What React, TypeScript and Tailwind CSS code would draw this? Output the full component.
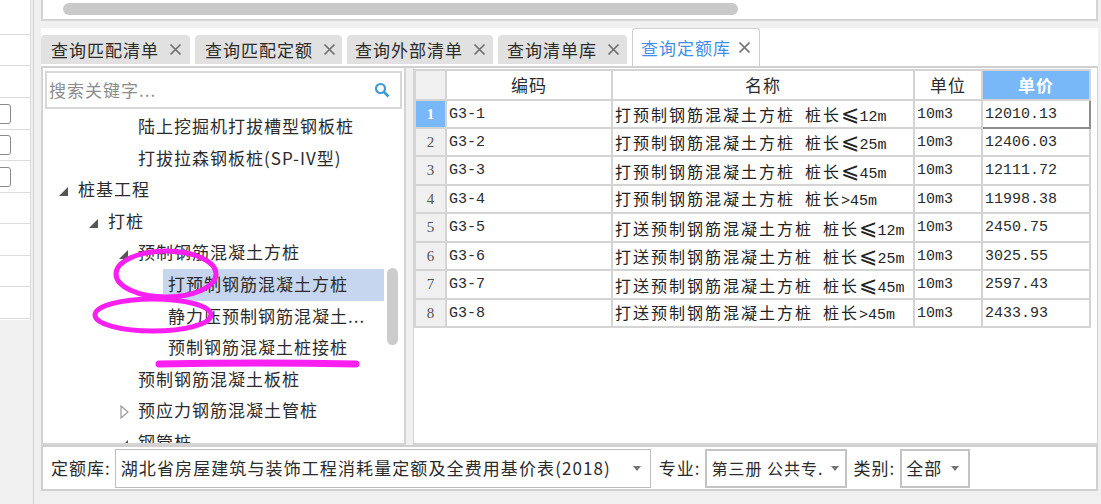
const CJK = '"Noto Sans CJK SC", sans-serif';
const MONO = '"Liberation Mono", "DejaVu Sans Mono", monospace';
const tabs = [
  { t: '查询匹配清单', c: 'w-[149px] pl-[10px]' },
  { t: '查询匹配定额', c: 'w-[147px] pl-[10px]' },
  { t: '查询外部清单', c: 'w-[146px] pl-[8px]' },
  { t: '查询清单库', c: 'w-[129px] pl-[9px]' },
];
const rows = [
  ['G3-1', '打预制钢筋混凝土方桩', '≤', '12m', '12010.13'],
  ['G3-2', '打预制钢筋混凝土方桩', '≤', '25m', '12406.03'],
  ['G3-3', '打预制钢筋混凝土方桩', '≤', '45m', '12111.72'],
  ['G3-4', '打预制钢筋混凝土方桩', '', '>45m', '11998.38'],
  ['G3-5', '打送预制钢筋混凝土方桩', '≤', '12m', '2450.75'],
  ['G3-6', '打送预制钢筋混凝土方桩', '≤', '25m', '3025.55'],
  ['G3-7', '打送预制钢筋混凝土方桩', '≤', '45m', '2597.43'],
  ['G3-8', '打送预制钢筋混凝土方桩', '', '>45m', '2433.93'],
];
const tree: { t: string; pl: string; a?: 'open' | 'closed'; sel?: boolean }[] = [
  { t: '陆上挖掘机打拔槽型钢板桩', pl: 'pl-[95px]' },
  { t: '打拔拉森钢板桩(SP-IV型)', pl: 'pl-[95px]' },
  { t: '桩基工程', pl: 'pl-[35px]', a: 'open' },
  { t: '打桩', pl: 'pl-[65px]', a: 'open' },
  { t: '预制钢筋混凝土方桩', pl: 'pl-[95px]', a: 'open' },
  { t: '打预制钢筋混凝土方桩', pl: 'pl-[125px]', sel: true },
  { t: '静力压预制钢筋混凝土...', pl: 'pl-[125px]' },
  { t: '预制钢筋混凝土桩接桩', pl: 'pl-[125px]' },
  { t: '预制钢筋混凝土板桩', pl: 'pl-[95px]' },
  { t: '预应力钢筋混凝土管桩', pl: 'pl-[95px]', a: 'closed' },
  { t: '钢管桩', pl: 'pl-[95px]', a: 'open' },
];

function Close() {
  return (
    <svg width="13" height="13" viewBox="0 0 13 13" className="shrink-0">
      <path d="M1.5 1.5 L11.5 11.5 M11.5 1.5 L1.5 11.5" stroke="#707070" strokeWidth="1.7" />
    </svg>
  );
}
function Caret() {
  return (
    <svg width="8" height="5" viewBox="0 0 8 5" className="shrink-0">
      <path d="M0 0 H8 L4 5 Z" fill="#777" />
    </svg>
  );
}
function Arrow({ kind }: { kind: 'open' | 'closed' }) {
  if (kind === 'open')
    return (
      <svg width="9" height="9" viewBox="0 0 9 9" className="absolute left-[-19px] top-[13px]">
        <path d="M9 0 V9 H0 Z" fill="#555" />
      </svg>
    );
  return (
    <svg width="9" height="14" viewBox="0 0 9 14" className="absolute left-[-18px] top-[10px]">
      <path d="M1 1 L8 7 L1 13 Z" fill="#fff" stroke="#999" strokeWidth="1.2" />
    </svg>
  );
}

export default function App() {
  return (
    <div
      className="relative flex h-[504px] w-[1101px] overflow-hidden bg-[#f0f0f0] text-[17px] tracking-[1px] text-[#2b2b2b]"
      style={{ fontFamily: CJK }}
    >
      {/* left strip */}
      <div className="h-full w-[34px] shrink-0 border-r border-[#d4d4d4]">
        <div className="h-[320px] w-[31px] border-r border-[#dcdcdc] bg-white">
          {[35, 31, 32, 32, 31, 32, 31, 32, 31, 32].map((h, i) => (
            <div key={i} className="flex items-center border-b border-[#dcdcdc]" style={{ height: h }}>
              {i >= 3 && i <= 5 && <div className="ml-[-9px] h-[20px] w-[20px] rounded-[3px] border border-[#8a8a8a] bg-white" />}
            </div>
          ))}
        </div>
      </div>

      {/* main */}
      <div className="flex h-full min-w-0 flex-1 flex-col pl-[7px] pr-[3px]">
        <div className="h-[21px] shrink-0 border-x-2 border-b-2 border-[#d4d4d4] bg-white pl-[20px]">
          <div className="mt-[3px] h-[12px] w-[675px] rounded-full bg-[#c9c9c9]" />
        </div>
        <div className="h-[7px] shrink-0" />

        {/* tabs */}
        <div className="flex h-[38px] shrink-0 items-end gap-[5px] bg-white pb-[2px]">
          {tabs.map((x) => (
            <div key={x.t} className={`flex h-[29px] items-center gap-[10px] rounded-t-[4px] bg-[#e1e1e1] ${x.c}`}>
              <span className="whitespace-nowrap">{x.t}</span>
              <Close />
            </div>
          ))}
          <div className="mb-[-2px] flex h-[38px] w-[128px] items-center gap-[7px] rounded-t-[4px] border-x border-t border-[#cfcfcf] bg-white pl-[8px] text-[#3f8fe8]">
            <span className="whitespace-nowrap">查询定额库</span>
            <Close />
          </div>
        </div>

        {/* content */}
        <div className="flex h-[379px] shrink-0 border-t-2 border-[#d0d0d0]">
          {/* tree panel */}
          <div className="flex h-full w-[365px] shrink-0 flex-col border-x-2 border-b-2 border-[#d4d4d4] bg-white pt-[3px]">
            <div className="mx-[2px] flex h-[38px] shrink-0 items-center justify-between border-2 border-[#d8d8d8] pl-[2px] pr-[10px]">
              <span className="text-[#8c8c8c]">搜索关键字...</span>
              <svg width="16" height="16" viewBox="0 0 16 16">
                <circle cx="6.5" cy="6.5" r="4.5" fill="none" stroke="#3e9ad6" strokeWidth="2.2" />
                <path d="M10 10 L14.5 14.5" stroke="#3e9ad6" strokeWidth="2.6" />
              </svg>
            </div>
            <div className="relative mt-[2px] min-h-0 flex-1 overflow-hidden">
              {tree.map((n) => (
                <div key={n.t} className={`flex h-[31.6px] items-center ${n.pl}`}>
                  <div className="relative">
                    {n.a && <Arrow kind={n.a} />}
                    <div className={`flex h-[31.6px] items-center whitespace-nowrap pb-[2px] ${n.sel ? 'ml-[-5px] w-[221px] bg-[#c6d6ee] pl-[5px]' : ''}`}>{n.t}</div>
                  </div>
                </div>
              ))}
              <div className="absolute left-[344px] top-[157px] h-[77px] w-[11px] rounded-full bg-[#cccccc]" />
            </div>
          </div>

          {/* table */}
          <div className="ml-[7px] min-w-0 flex-1 border-x border-b-2 border-[#d4d4d4] bg-white pt-[1px]">
            <table className="table-fixed border-collapse leading-none" style={{ width: 675 }}>
              <colgroup>
                <col className="w-[31px]" />
                <col className="w-[166px]" />
                <col className="w-[302px]" />
                <col className="w-[68px]" />
                <col className="w-[108px]" />
              </colgroup>
              <thead>
                <tr className="h-[30px] text-center">
                  <th className="border-2 border-[#d4d4d4] bg-[#f0f0f0] font-normal" />
                  <th className="border-2 border-[#d4d4d4] pb-[2px] font-normal">编码</th>
                  <th className="border-2 border-[#d4d4d4] pb-[2px] font-normal">名称</th>
                  <th className="border-2 border-[#d4d4d4] pb-[2px] font-normal">单位</th>
                  <th className="border-2 border-[#d4d4d4] bg-[#79b8f8] pb-[2px] font-bold text-white">单价</th>
                </tr>
              </thead>
              <tbody>
                {rows.map((r, i) => (
                  <tr key={r[0]} className={i >= 2 && i % 2 === 0 ? 'h-[29px]' : 'h-[28px]'}>
                    <td
                      className={`border-2 border-[#d4d4d4] p-0 text-center text-[15px] tracking-normal ${i === 0 ? 'bg-[#79b8f8] font-bold text-white' : 'bg-[#f0f0f0] text-[#555]'}`}
                      style={{ fontFamily: '"Liberation Serif", serif' }}
                    >
                      {i + 1}
                    </td>
                    <td className="border-2 border-[#d4d4d4] p-0 pl-[2px] text-[15px] tracking-normal" style={{ fontFamily: MONO }}>
                      {r[0]}
                    </td>
                    <td className="whitespace-nowrap border-2 border-[#d4d4d4] p-0 pl-[2px] text-[16px] tracking-[2px] text-[#222]">
                      {r[1]}
                      <span className="ml-[10px]">桩长</span>
                      {r[2] && <span className="text-[22px] tracking-normal" style={{ fontFamily: '"DejaVu Sans", sans-serif' }}>⩽</span>}
                      <span className="text-[15px] tracking-normal" style={{ fontFamily: MONO }}>{r[3]}</span>
                    </td>
                    <td className="border-2 border-[#d4d4d4] p-0 pl-[2px] text-[15px] tracking-normal" style={{ fontFamily: MONO }}>
                      10m3
                    </td>
                    <td
                      className={`border-2 p-0 pl-[2px] text-[15px] tracking-normal ${i === 0 ? 'border-[#8c8c8c]' : 'border-[#d4d4d4]'}`}
                      style={{ fontFamily: MONO }}
                    >
                      {r[4]}
                    </td>
                  </tr>
                ))}
              </tbody>
            </table>
          </div>
        </div>

        {/* bottom bar */}
        <div className="flex h-[46px] shrink-0 items-center border-2 border-[#d0d0d0] bg-white pl-[8px]">
          <span className="whitespace-nowrap">定额库:</span>
          <div className="ml-[4px] flex h-[39px] w-[536px] items-center justify-between border border-[#bdbdbd] pl-[5px] pr-[9px]">
            <span className="whitespace-nowrap text-[17px] tracking-[1.1px]">湖北省房屋建筑与装饰工程消耗量定额及全费用基价表(2018)</span>
            <Caret />
          </div>
          <span className="ml-[8px] whitespace-nowrap">专业:</span>
          <div className="ml-[5px] flex h-[39px] w-[142px] items-center justify-between overflow-hidden border-2 border-[#c4c4c4] pl-[4px] pr-[6px]">
            <span className="whitespace-nowrap text-[16px] tracking-[1px]">第三册 公共专.</span>
            <Caret />
          </div>
          <span className="ml-[6px] whitespace-nowrap">类别:</span>
          <div className="ml-[5px] flex h-[39px] w-[70px] items-center justify-between border-2 border-[#c4c4c4] pl-[4px] pr-[9px]">
            <span className="whitespace-nowrap">全部</span>
            <Caret />
          </div>
        </div>
      </div>

      {/* pen annotations */}
      <svg className="pointer-events-none absolute left-0 top-0" width="1101" height="504">
        <ellipse cx="166" cy="274" rx="50" ry="23" fill="none" stroke="#f81ff0" strokeWidth="5" />
        <ellipse cx="153" cy="315" rx="58" ry="16" fill="none" stroke="#f81ff0" strokeWidth="5" />
        <path d="M159 364 Q260 362 356 364" fill="none" stroke="#f81ff0" strokeWidth="7" strokeLinecap="round" />
      </svg>
    </div>
  );
}
